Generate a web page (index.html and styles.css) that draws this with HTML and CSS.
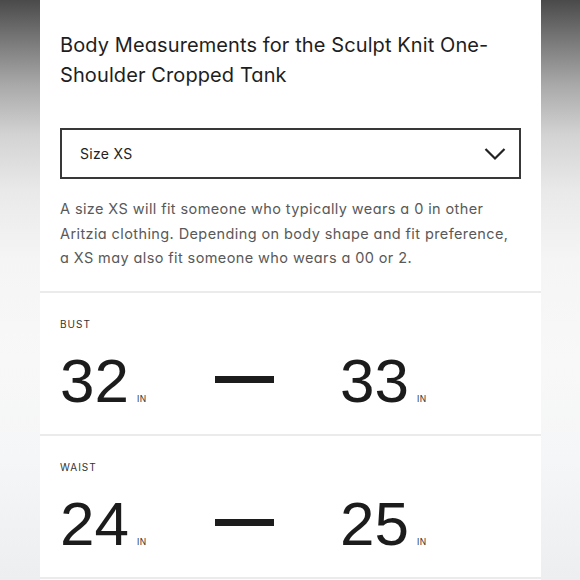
FILE: index.html
```html
<!DOCTYPE html>
<html lang="en">
<head>
<meta charset="utf-8">
<title>Body Measurements</title>
<link rel="stylesheet" href="styles.css">
</head>
<body>
<main class="card">
  <section class="intro">
    <h1 class="title">Body Measurements for the Sculpt Knit One-Shoulder Cropped Tank</h1>
    <div class="select">
      <span class="select-label">Size XS</span>
      <svg class="chevron" width="22" height="14" viewBox="0 0 22 14" aria-hidden="true">
        <path d="M1.5 2 L11 11.5 L20.5 2" fill="none" stroke="#222" stroke-width="2.2"/>
      </svg>
    </div>
    <p class="note">A size XS will fit someone who typically wears a 0 in other Aritzia clothing. Depending on body shape and fit preference, a XS may also fit someone who wears a 00 or 2.</p>
  </section>
  <section class="measure">
    <div class="label">BUST</div>
    <div class="range">
      <div class="val val-min"><span class="num">32</span><span class="unit">IN</span></div>
      <div class="dash"></div>
      <div class="val val-max"><span class="num">33</span><span class="unit">IN</span></div>
    </div>
  </section>
  <section class="measure">
    <div class="label">WAIST</div>
    <div class="range">
      <div class="val val-min"><span class="num">24</span><span class="unit">IN</span></div>
      <div class="dash"></div>
      <div class="val val-max"><span class="num">25</span><span class="unit">IN</span></div>
    </div>
  </section>
  <div class="end-rule"></div>
</main>
</body>
</html>
```
FILE: styles.css
```css
html, body {
  margin: 0;
  padding: 0;
}
body {
  height: 580px;
  overflow: hidden;
  background: linear-gradient(to bottom,
    #4a4a4a 0px,
    #787878 40px,
    #a9a9a9 85px,
    #d3d3d3 135px,
    #e9e9e9 190px,
    #f5f5f5 260px,
    #f8f8f8 360px,
    #f5f6f7 460px,
    #eceef0 580px);
  font-family: Inter, "Noto Sans", sans-serif;
  font-feature-settings: "cv11";
  color: #222;
}
.card {
  width: 501px;
  margin-left: 40px;
  height: 580px;
  background: #fff;
}
.intro {
  padding: 30px 20px 20px 20px;
}
.title {
  margin: 0;
  font-size: 20px;
  line-height: 30px;
  font-weight: 400;
  letter-spacing: 0.1px;
  color: #1e1e1e;
}
.select {
  margin-top: 38px;
  height: 47px;
  border: 2px solid #383838;
  display: flex;
  align-items: center;
  justify-content: space-between;
  padding: 0 13px 0 18px;
}
.select-label {
  font-size: 14px;
  letter-spacing: 0.3px;
  color: #222;
}
.chevron {
  display: block;
}
.note {
  margin: 18px 0 0 0;
  font-size: 14.5px;
  line-height: 24.5px;
  letter-spacing: 0.4px;
  color: #595959;
}
.measure {
  border-top: 2px solid #ebebeb;
  padding: 25px 20px 22px 20px;
}
.end-rule {
  border-top: 2px solid #ebebeb;
}
.label {
  font-size: 10px;
  line-height: 12px;
  letter-spacing: 1px;
  color: #333;
}
.range {
  margin-top: 20px;
  display: flex;
  align-items: flex-start;
}
.val {
  display: flex;
  align-items: baseline;
  gap: 8px;
}
.val-min {
  width: 155px;
}
.num {
  font-family: "Liberation Sans", Arial, sans-serif;
  font-size: 62px;
  line-height: 62px;
  color: #1c1c1c;
}
.unit {
  font-size: 8.5px;
  letter-spacing: 0.5px;
  color: #333;
}
.dash {
  width: 59px;
  height: 7px;
  margin-top: 26.5px;
  margin-right: 66px;
  background: #1c1c1c;
}
```
